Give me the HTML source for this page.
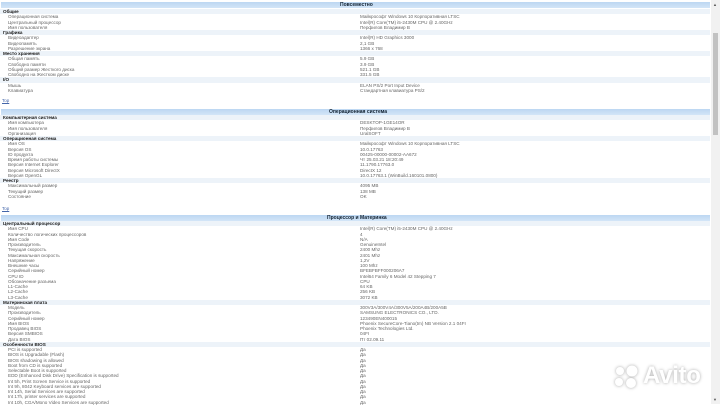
<!DOCTYPE html>
<html><head><meta charset="utf-8">
<style>
*{margin:0;padding:0;box-sizing:border-box}
html,body{width:720px;height:404px;overflow:hidden;background:#fff;font-family:"Liberation Sans","Noto Sans CJK SC",sans-serif}
.bar{position:absolute;left:1px;width:709px;height:6px;background:linear-gradient(#bcd7f2,#d3e5f7);font-size:5px;font-weight:bold;line-height:6px;color:#123;}
.bar span{position:absolute;left:339px}
.blk{position:absolute;left:0;width:710px}
.r{height:5.25px;font-size:4.6px;line-height:5.25px;color:#666;position:relative;white-space:nowrap}
.r .l{position:absolute;left:8px}
.r .v{position:absolute;left:360px}
.h{background:#edf3f9;color:#222;font-weight:bold}
.h .l{left:3px}
.top{position:absolute;left:2px;font-size:4.5px;color:#46a;text-decoration:underline}
.sb{position:absolute;left:711px;top:0;width:9px;height:404px;background:#f1f1f1}
.th{position:absolute;left:713px;top:33px;width:5px;height:102px;background:#c2c2c2}
.avito{position:absolute;left:643px;top:362px;font-size:24px;font-weight:bold;color:#fff;text-shadow:0 0 3px rgba(0,0,0,.35);letter-spacing:-0.3px}
.dots{position:absolute;left:613px;top:364px}
</style></head><body>

<div class="bar" style="top:2px"><span>Повсеместно</span></div>
<div class="blk" style="top:9px">
<div class="r h"><span class="l">Общие</span></div>
<div class="r"><span class="l">Операционная система</span><span class="v">Майкрософт Windows 10 Корпоративная LTSC</span></div>
<div class="r"><span class="l">Центральный процессор</span><span class="v">Intel(R) Core(TM) i5-2430M CPU @ 2.40GHz</span></div>
<div class="r"><span class="l">Имя пользователя</span><span class="v">Перфилов Владимир В</span></div>
<div class="r h"><span class="l">Графика</span></div>
<div class="r"><span class="l">Видеоадаптер</span><span class="v">Intel(R) HD Graphics 3000</span></div>
<div class="r"><span class="l">Видеопамять</span><span class="v">2,1 GB</span></div>
<div class="r"><span class="l">Разрешение экрана</span><span class="v">1366 x 768</span></div>
<div class="r h"><span class="l">Место хранения</span></div>
<div class="r"><span class="l">Общая память</span><span class="v">5.9 GB</span></div>
<div class="r"><span class="l">Свободно памяти</span><span class="v">3.9 GB</span></div>
<div class="r"><span class="l">Общий размер Жесткого диска</span><span class="v">521.1 GB</span></div>
<div class="r"><span class="l">Свободно на Жестком диске</span><span class="v">331.5 GB</span></div>
<div class="r h"><span class="l">I/O</span></div>
<div class="r"><span class="l">Мышь</span><span class="v">ELAN PS/2 Port Input Device</span></div>
<div class="r"><span class="l">Клавиатура</span><span class="v">Стандартная клавиатура PS/2</span></div>
</div>
<div class="top" style="top:98px">Top</div>

<div class="bar" style="top:109px"><span style="left:328px">Операционная система</span></div>
<div class="blk" style="top:115px">
<div class="r h"><span class="l">Компьютерная система</span></div>
<div class="r"><span class="l">Имя компьютера</span><span class="v">DESKTOP-1GE14OR</span></div>
<div class="r"><span class="l">Имя пользователя</span><span class="v">Перфилов Владимир В</span></div>
<div class="r"><span class="l">Организация</span><span class="v">UralSOFT</span></div>
<div class="r h"><span class="l">Операционная система</span></div>
<div class="r"><span class="l">Имя OS</span><span class="v">Майкрософт Windows 10 Корпоративная LTSC</span></div>
<div class="r"><span class="l">Версия OS</span><span class="v">10.0.17763</span></div>
<div class="r"><span class="l">ID продукта</span><span class="v">00425-00000-00002-AA672</span></div>
<div class="r"><span class="l">Время работы системы</span><span class="v">Чт 25.03.21 18:20:49</span></div>
<div class="r"><span class="l">Версия Internet Explorer</span><span class="v">11.1790.17763.0</span></div>
<div class="r"><span class="l">Версия Microsoft DirectX</span><span class="v">DirectX 12</span></div>
<div class="r"><span class="l">Версия OpenGL</span><span class="v">10.0.17763.1 (WinBuild.160101.0800)</span></div>
<div class="r h"><span class="l">Реестр</span></div>
<div class="r"><span class="l">Максимальный размер</span><span class="v">4095 MB</span></div>
<div class="r"><span class="l">Текущий размер</span><span class="v">138 MB</span></div>
<div class="r"><span class="l">Состояние</span><span class="v">OK</span></div>
</div>
<div class="top" style="top:206px">Top</div>

<div class="bar" style="top:215px"><span style="left:326px">Процессор и Материнка</span></div>
<div class="blk" style="top:221px">
<div class="r h"><span class="l">Центральный процессор</span></div>
<div class="r"><span class="l">Имя CPU</span><span class="v">Intel(R) Core(TM) i5-2430M CPU @ 2.40GHz</span></div>
<div class="r"><span class="l">Количество логических процессоров</span><span class="v">4</span></div>
<div class="r"><span class="l">Имя Code</span><span class="v">N/A</span></div>
<div class="r"><span class="l">Производитель</span><span class="v">GenuineIntel</span></div>
<div class="r"><span class="l">Текущая скорость</span><span class="v">2400 Mhz</span></div>
<div class="r"><span class="l">Максимальная скорость</span><span class="v">2401 Mhz</span></div>
<div class="r"><span class="l">Напряжение</span><span class="v">1,2V</span></div>
<div class="r"><span class="l">Внешние часы</span><span class="v">100 Mhz</span></div>
<div class="r"><span class="l">Серийный номер</span><span class="v">BFEBFBFF000206A7</span></div>
<div class="r"><span class="l">CPU ID</span><span class="v">Intel64 Family 6 Model 42 Stepping 7</span></div>
<div class="r"><span class="l">Обозначение разъема</span><span class="v">CPU</span></div>
<div class="r"><span class="l">L1-Cache</span><span class="v">64 KB</span></div>
<div class="r"><span class="l">L2-Cache</span><span class="v">256 KB</span></div>
<div class="r"><span class="l">L3-Cache</span><span class="v">3072 KB</span></div>
<div class="r h"><span class="l">Материнская плата</span></div>
<div class="r"><span class="l">Модель</span><span class="v">300V3A/300V4A/300V5A/200A4B/200A5B</span></div>
<div class="r"><span class="l">Производитель</span><span class="v">SAMSUNG ELECTRONICS CO., LTD.</span></div>
<div class="r"><span class="l">Серийный номер</span><span class="v">123490EN400015</span></div>
<div class="r"><span class="l">Имя BIOS</span><span class="v">Phoenix SecureCore-Tiano(tm) NB Version 2.1 04FI</span></div>
<div class="r"><span class="l">Продавец BIOS</span><span class="v">Phoenix Technologies Ltd.</span></div>
<div class="r"><span class="l">Версия SMBIOS</span><span class="v">04FI</span></div>
<div class="r"><span class="l">Дата BIOS</span><span class="v">Пт 02.09.11</span></div>
<div class="r h"><span class="l">Особенности BIOS</span></div>
<div class="r"><span class="l">PCI is supported</span><span class="v">Да</span></div>
<div class="r"><span class="l">BIOS is Upgradable (Flash)</span><span class="v">Да</span></div>
<div class="r"><span class="l">BIOS shadowing is allowed</span><span class="v">Да</span></div>
<div class="r"><span class="l">Boot from CD is supported</span><span class="v">Да</span></div>
<div class="r"><span class="l">Selectable Boot is supported</span><span class="v">Да</span></div>
<div class="r"><span class="l">EDD (Enhanced Disk Drive) Specification is supported</span><span class="v">Да</span></div>
<div class="r"><span class="l">Int 5h, Print Screen Service is supported</span><span class="v">Да</span></div>
<div class="r"><span class="l">Int 9h, 8042 Keyboard services are supported</span><span class="v">Да</span></div>
<div class="r"><span class="l">Int 14h, Serial Services are supported</span><span class="v">Да</span></div>
<div class="r"><span class="l">Int 17h, printer services are supported</span><span class="v">Да</span></div>
<div class="r"><span class="l">Int 10h, CGA/Mono Video Services are supported</span><span class="v">Да</span></div>
</div>

<svg class="dots" width="30" height="26" viewBox="0 0 30 26" style="filter:drop-shadow(0 0 1.5px rgba(0,0,0,.35))">
<circle cx="7" cy="7" r="4" fill="#fff"/><circle cx="19" cy="7" r="5.5" fill="#fff"/>
<circle cx="6" cy="18" r="4" fill="#fff"/><circle cx="18" cy="19" r="5" fill="#fff"/>
</svg>
<div class="avito">Avito</div>

<div class="sb"></div>
<div class="th"></div>
<div style="position:absolute;left:713px;top:2px;font-size:4px;color:#555">▲</div>
<div style="position:absolute;left:713px;top:397px;font-size:4px;color:#555">▼</div>
</body></html>
